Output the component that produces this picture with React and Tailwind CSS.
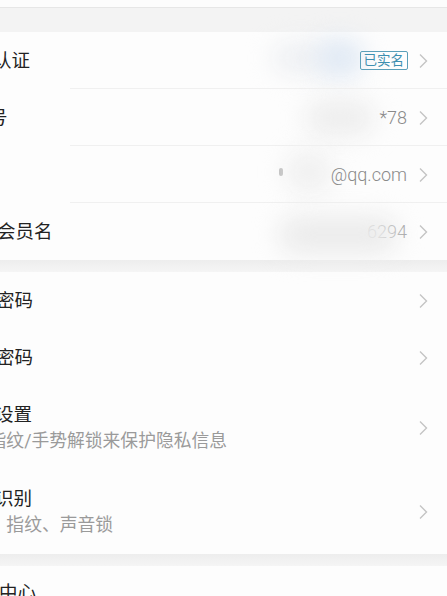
import React from "react";

function Chevron() {
  return (
    <svg width="10" height="16" viewBox="0 0 10 16" className="shrink-0">
      <path d="M2 1.5 L8.5 8 L2 14.5" fill="none" stroke="#c4c4c4" strokeWidth="1.4" />
    </svg>
  );
}

function Blob({ className }) {
  return <div className={"absolute rounded-full blur-md pointer-events-none " + className} />;
}

function Row({ label, labelMl, value, badge, blob, divider = true, sub, subMl }) {
  return (
    <div className={"relative flex items-center pr-[19px] " + (sub ? "h-[84px]" : "h-[57px]")}>
      {blob}
      <div className="flex-1 min-w-0 flex flex-col">
        <div className={"text-[18.5px] leading-[26px] text-[#222] whitespace-nowrap " + labelMl}>{label}</div>
        {sub && (
          <div className={"text-[17.8px] leading-[26px] text-[#9a9a9a] whitespace-nowrap " + subMl}>{sub}</div>
        )}
      </div>
      {value && (
        <div className="relative text-[18px] font-light text-[#8a8a8a] mr-[11px] whitespace-nowrap">{value}</div>
      )}
      {badge && (
        <div className="relative mr-[10px] border border-[#5a9fb9] rounded-[2px] px-[3px] h-[19px] flex items-center text-[13.5px] leading-none text-[#3d8fb0]">
          {badge}
        </div>
      )}
      <Chevron />
      {divider && <div className="absolute left-[70px] right-0 bottom-0 h-px bg-[#f0f0f0]" />}
    </div>
  );
}

export default function App() {
  return (
    <div
      className="w-[447px] h-[596px] overflow-hidden bg-[#fdfdfd]"
      style={{ fontFamily: '"Roboto", "Noto Sans CJK SC", sans-serif' }}
    >
      <div className="h-[7px] bg-[#fcfcfc]" />
      <div className="h-px bg-[#e6e6e6]" />
      <div className="h-[24px] bg-[#f3f3f3]" />
      <div className="bg-[#fdfdfd]">
        <Row
          label="实名认证"
          labelMl="ml-[-44px]"
          badge="已实名"
          blob={
            <>
              <Blob className="left-[272px] top-[10px] w-[60px] h-[32px] bg-[#eef0f3]" />
              <Blob className="left-[316px] top-[6px] w-[48px] h-[40px] bg-[#e0e9f4]" />
            </>
          }
        />
        <Row
          label="手机号"
          labelMl="ml-[-48px]"
          value="*78"
          blob={<Blob className="left-[305px] top-[10px] w-[70px] h-[38px] bg-[#eeeeee]" />}
        />
        <Row
          label="邮箱"
          labelMl="ml-[-48px]"
          value="@qq.com"
          blob={
            <>
              <div className="absolute left-[279px] top-[22px] w-[4px] h-[8px] bg-[#9a9a9a] rounded-sm opacity-70" />
              <Blob className="left-[285px] top-[4px] w-[48px] h-[44px] bg-[#f0f0f0]" />
            </>
          }
        />
        <Row
          label="淘宝会员名"
          labelMl="ml-[-40px]"
          value={<span className="text-[#9d9d9d]">6294</span>}
          divider={false}
          blob={<Blob className="left-[278px] top-[12px] w-[120px] h-[40px] bg-[#ececec] z-10" />}
        />
      </div>
      <div className="h-[12px] bg-gradient-to-b from-[#ededed] to-[#f5f5f5]" />
      <div className="bg-[#fdfdfd]">
        <Row label="登录密码" labelMl="ml-[-41px]" divider={false} />
        <Row label="支付密码" labelMl="ml-[-41px]" divider={false} />
        <Row
          label="隐私设置"
          labelMl="ml-[-42px]"
          sub="使用指纹/手势解锁来保护隐私信息"
          subMl="ml-[-47px]"
          divider={false}
        />
        <Row
          label="生物识别"
          labelMl="ml-[-42px]"
          sub="人脸、指纹、声音锁"
          subMl="ml-[-47px]"
          divider={false}
        />
      </div>
      <div className="h-[12px] bg-gradient-to-b from-[#ededed] to-[#f5f5f5]" />
      <div className="bg-[#fdfdfd] h-[60px] flex items-start pt-[14px]">
        <div className="text-[18.5px] leading-[26px] text-[#222] whitespace-nowrap ml-[-38px]">安全中心</div>
      </div>
    </div>
  );
}
